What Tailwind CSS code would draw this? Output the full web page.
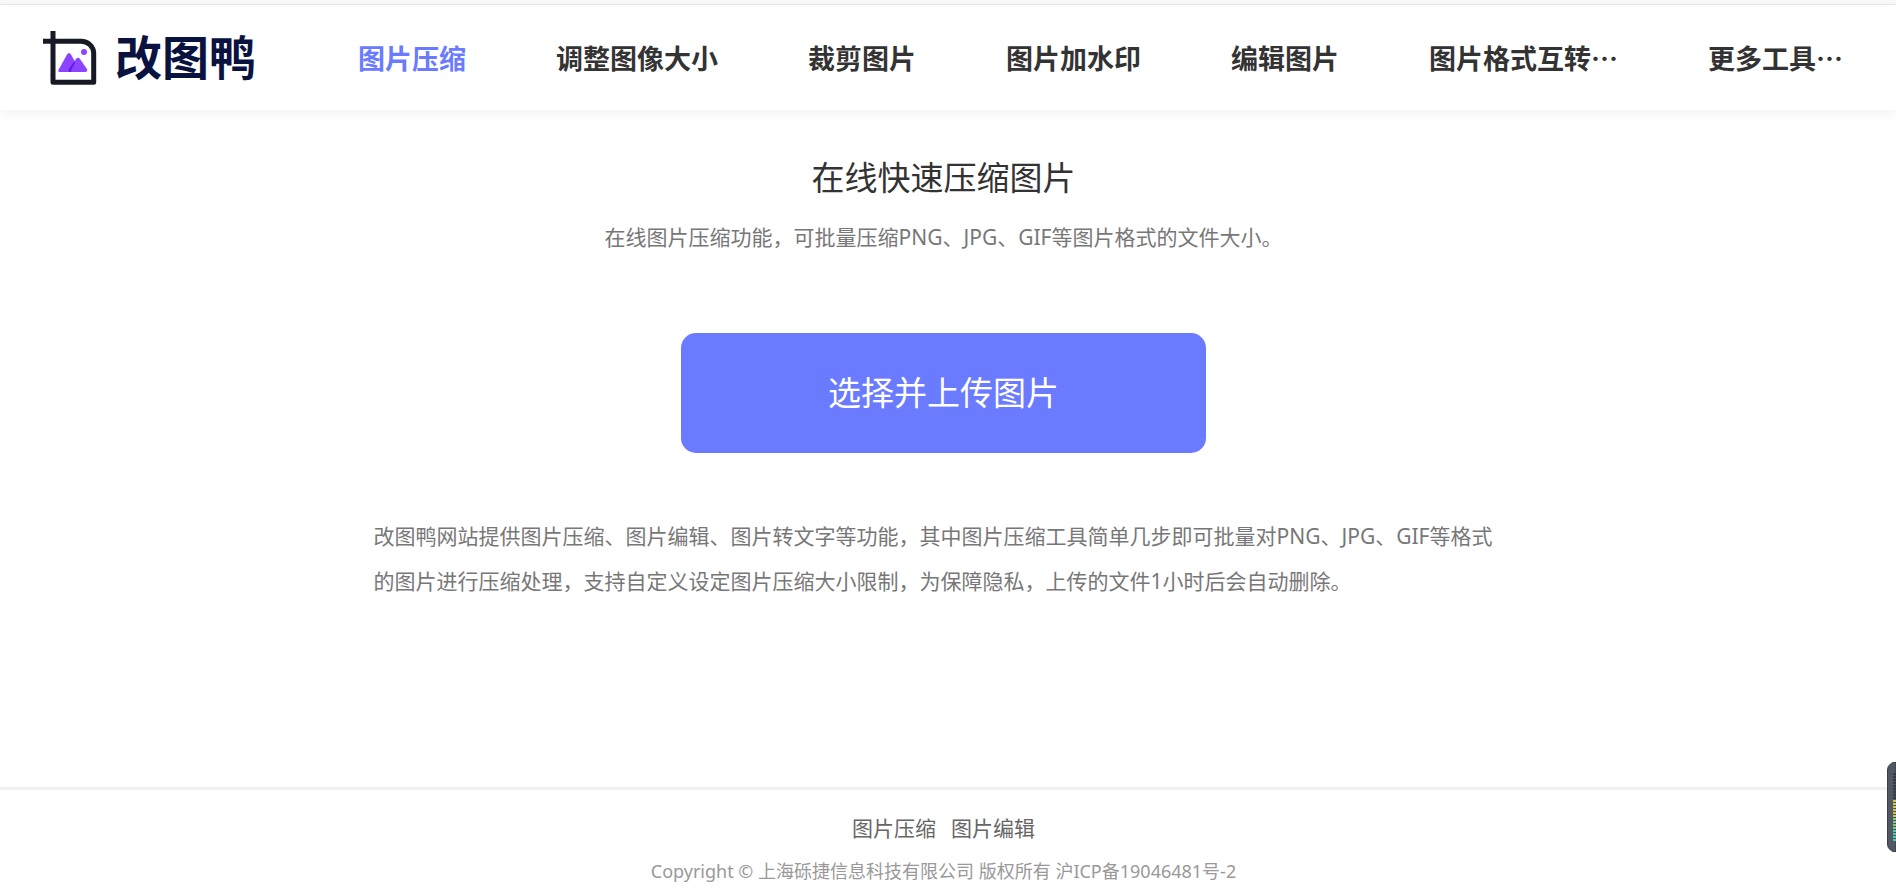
<!DOCTYPE html>
<html lang="zh-CN">
<head>
<meta charset="utf-8">
<meta name="viewport" content="width=device-width, initial-scale=1">
<title>改图鸭 - 图片压缩</title>
<script src="https://cdn.jsdelivr.net/npm/@tailwindcss/browser@4"></script>
</head>
<body class="flex min-h-screen flex-col bg-white font-['Noto_Sans','Noto_Sans_CJK_SC',sans-serif] text-[#333333]">
  <div class="h-[5px] shrink-0 border-b border-[#e8e8e8] bg-[#fafafa]"></div>
  <header class="flex h-[105px] shrink-0 items-center justify-between bg-white pl-[42px] pr-[53px] shadow-[0_3px_12px_rgba(0,0,0,0.06)]">
    <a href="#" class="flex items-center gap-[18px]" aria-label="改图鸭">
      <svg class="mt-[2px] h-[55px] w-[55px]" viewBox="0 0 55 55" fill="none" aria-hidden="true">
        <path d="M1 10.3H39C46 10.3 51.700 15.500 51.700 22.500V51.300H11V0" stroke="#171925" stroke-width="5" stroke-linejoin="round"/>
        <path d="M17 38L25 23.500Q27 20.500 29 23.500L36 36Q38 41 34 41H18Q15 41 17 38Z" fill="#8c45ff"/>
        <path d="M27 38L34 28Q36 25.500 38 28L45 38Q46 41 43 41H29Q25.500 41 27 38Z" fill="#8c45ff"/>
        <path d="M32.200 30.500L27 38Q25.500 41 29 41C29 38 31 35.500 33.200 31.500Z" fill="#6a12f5"/>
        <circle cx="42" cy="21" r="3" fill="#8c45ff"/>
      </svg>
      <span class="pb-[6px] font-['Noto_Sans_CJK_SC',sans-serif] text-[47px] font-bold leading-[60px] text-[#0a1240]">改图鸭</span>
    </a>
    <nav class="flex gap-[90px] whitespace-nowrap font-['Noto_Sans_CJK_SC',sans-serif] text-[27px] font-bold leading-[42px]">
      <a href="#" class="text-[#6a7bff]">图片压缩</a>
      <a href="#">调整图像大小</a>
      <a href="#">裁剪图片</a>
      <a href="#">图片加水印</a>
      <a href="#">编辑图片</a>
      <a href="#">图片格式互转…</a>
      <a href="#">更多工具…</a>
    </nav>
  </header>

  <main class="flex grow flex-col items-center pr-[9px] pt-[44px]">
    <h1 class="text-[33px] leading-[48px]">在线快速压缩图片</h1>
    <p class="mt-5 text-[21px] leading-[30px] text-[#777777]">在线图片压缩功能，可批量压缩PNG、JPG、GIF等图片格式的文件大小。</p>
    <button type="button" class="mt-[81px] h-[120px] w-full max-w-[525px] rounded-[15px] bg-[#6a7bff] text-[33px] text-white">选择并上传图片</button>
    <p class="mt-[61px] w-full max-w-[1140px] pr-2 text-[21px] leading-[45px] text-[#777777]">改图鸭网站提供图片压缩、图片编辑、图片转文字等功能，其中图片压缩工具简单几步即可批量对PNG、JPG、GIF等格式的图片进行压缩处理，支持自定义设定图片压缩大小限制，为保障隐私，上传的文件1小时后会自动删除。</p>
  </main>

  <footer class="flex flex-col items-center border-t-[3px] border-[#f0f0f5] pb-[10px] pr-[9px] pt-[23px]">
    <div class="flex gap-[15px] text-[21px] leading-[30px] text-[#666666]">
      <a href="#">图片压缩</a>
      <a href="#">图片编辑</a>
    </div>
    <p class="mt-4 text-[18px] leading-6 text-[#999999]">Copyright © 上海砾捷信息科技有限公司 版权所有 沪ICP备19046481号-2</p>
  </footer>

  <!-- Level meter docked at the window edge -->
  <svg class="fixed bottom-[41px] right-0 h-[90px] w-[9px]" viewBox="0 0 9 90" aria-hidden="true">
    <path d="M9 .5H7Q5 .5 3.500 2Q.5 4 .5 8V82Q.5 86 3.500 88Q5 89.500 7 89.500H9Z" fill="#515763" stroke="#393e48"/>
    <path d="M7.500 11V38" stroke="#343944" stroke-width="3" stroke-dasharray="2 1"/>
    <path d="M7.500 38V56" stroke="#cdc84f" stroke-width="3" stroke-dasharray="2 1"/>
    <path d="M7.500 56V68" stroke="#7fd07c" stroke-width="3" stroke-dasharray="2 1"/>
    <path d="M7.500 68V79" stroke="#48cfae" stroke-width="3" stroke-dasharray="2 1"/>
  </svg>
</body>
</html>
